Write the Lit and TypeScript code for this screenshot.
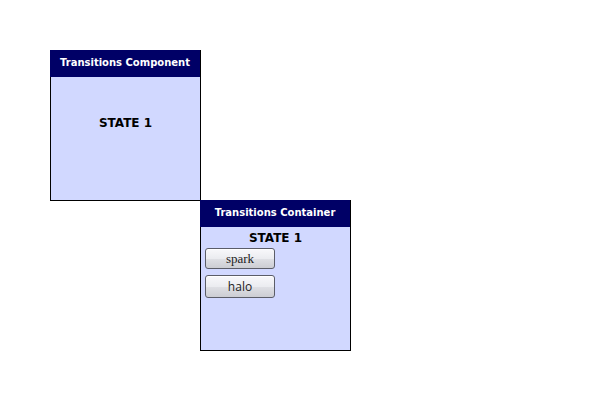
import { LitElement, html, css } from "lit";
import { customElement, property } from "lit/decorators.js";

@customElement("state-panel")
class StatePanel extends LitElement {
  @property() heading = "";

  static styles = css`
    :host {
      display: block;
      box-sizing: border-box;
      border: 1px solid #000;
      background: #d1d8ff;
      color: #000;
    }
    .title {
      margin: -1px 0 0 -1px;
      padding-bottom: 1px;
      background: #000066;
      color: #fff;
      font-size: 10px;
      font-weight: bold;
      line-height: 26px;
      text-align: center;
      white-space: nowrap;
    }
  `;

  render() {
    return html`
      <h2 class="title">${this.heading}</h2>
      <slot></slot>
    `;
  }
}

@customElement("app-root")
export class AppRoot extends LitElement {
  static styles = css`
    :host {
      display: block;
      box-sizing: border-box;
      min-height: 100vh;
      padding: 50px;
      background: #fff;
      font-family: Verdana, "DejaVu Sans", sans-serif;
    }
    .board {
      display: grid;
      grid-template-columns: repeat(2, 150px);
      grid-auto-rows: minmax(150px, auto);
    }
    state-panel {
      margin: 0 -1px -1px 0;
    }
    .second {
      grid-column: 2;
      grid-row: 2;
    }
    .state {
      margin: 0;
      padding-top: 2px;
      font-size: 12px;
      font-weight: bold;
      line-height: 19px;
      text-align: center;
    }
    .middle {
      padding-top: 37px;
    }
    .actions {
      display: flex;
      flex-direction: column;
      align-items: flex-start;
      gap: 6px;
      padding: 0 4px;
    }
    .button {
      box-sizing: border-box;
      width: 70px;
      height: 21px;
      padding: 0;
      border: 1px solid #5b5d68;
      border-radius: 3px;
      background: linear-gradient(#f8f8fb, #ebecf0 50%, #dfe0e5 51%, #cccdd3);
      box-shadow: inset 0 1px #fff;
      color: #222;
      font-family: "Open Sans", sans-serif;
      font-size: 12px;
      line-height: 19px;
    }
    .spark {
      font-family: "Liberation Serif", serif;
      font-size: 13px;
    }
    .halo {
      height: 23px;
    }
  `;

  render() {
    return html`
      <main class="board">
        <state-panel heading="Transitions Component">
          <p class="state middle">STATE 1</p>
        </state-panel>
        <state-panel class="second" heading="Transitions Container">
          <p class="state">STATE 1</p>
          <div class="actions">
            <button class="button spark" type="button">spark</button>
            <button class="button halo" type="button">halo</button>
          </div>
        </state-panel>
      </main>
    `;
  }
}
